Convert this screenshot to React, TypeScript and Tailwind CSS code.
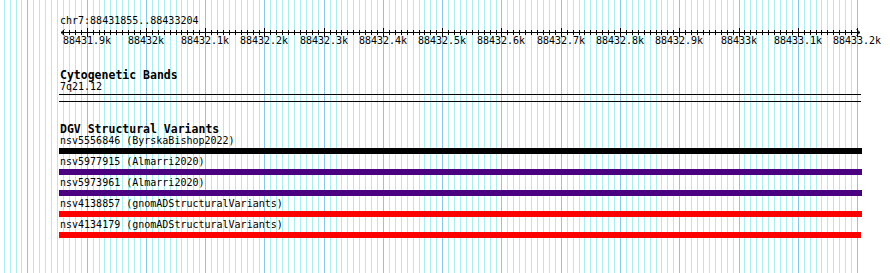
import React from "react";

const START = 88431855;
const PX = 800 / 1350;
const X0 = 60.5;
const xOf = (p: number) => Math.floor(X0 + (p - START) * PX);

const gridPs: number[] = [];
for (let p = 88431760; p <= 88433200; p += 10) gridPs.push(p);
const tickPs = gridPs.filter((p) => xOf(p) >= 62 && xOf(p) <= 858);
const majorPs = gridPs.filter((p) => p % 100 === 0 && p >= 88431900);

const features = [
  { label: "nsv5556846 (ByrskaBishop2022)", color: "bg-black", w: "w-[803px]" },
  { label: "nsv5977915 (Almarri2020)", color: "bg-[#4b0082]", w: "w-[803px]" },
  { label: "nsv5973961 (Almarri2020)", color: "bg-[#4b0082]", w: "w-[803px]" },
  { label: "nsv4138857 (gnomADStructuralVariants)", color: "bg-[#ff0000]", w: "w-[803px]" },
  { label: "nsv4134179 (gnomADStructuralVariants)", color: "bg-[#ff0000]", w: "w-[802px]" },
];

function Ruler() {
  return (
    <div className="relative h-[22px] w-[890px]">
      <svg className="absolute left-0 top-0" width={890} height={10} shapeRendering="crispEdges">
        <line x1={61} y1={5.5} x2={860} y2={5.5} stroke="#000" strokeWidth={1} />
        {tickPs.map((p) => {
          const x = xOf(p) + 0.5;
          const major = p % 100 === 0;
          return <line key={p} x1={x} x2={x} y1={major ? 1 : 3} y2={major ? 10 : 8} stroke="#000" strokeWidth={1} />;
        })}
        <polyline points="64.5,2.5 61,5.5 64.5,8.5" fill="none" stroke="#000" strokeWidth={1} shapeRendering="auto" />
        <polyline points="856.5,2.5 860,5.5 856.5,8.5" fill="none" stroke="#000" strokeWidth={1} shapeRendering="auto" />
      </svg>
      {majorPs.map((p) => (
        <div
          key={p}
          className="absolute top-[8px] -translate-x-1/2 whitespace-nowrap text-[10px] leading-[12px]"
          style={{ left: xOf(p) }}
        >
          {(p / 1000).toString() + "k"}
        </div>
      ))}
    </div>
  );
}

export default function App() {
  return (
    <div className="relative h-[273px] w-[890px] overflow-hidden bg-white text-black font-['DejaVu_Sans_Mono',monospace]">
      <div className="absolute inset-0">
        {gridPs.map((p) => (
          <div
            key={p}
            className={p % 100 === 0 ? "absolute top-0 bottom-0 w-px bg-[#88c8ea]" : "absolute top-0 bottom-0 w-px bg-[#aaeef0]"}
            style={{ left: xOf(p) }}
          />
        ))}
      </div>
      <div className="relative flex flex-col">
        <div className="h-[15px]" />
        <div className="pl-[60px] text-[10px] leading-[12px]">chr7:88431855..88433204</div>
        <Ruler />
        <div className="h-[20px]" />
        <div className="pl-[60px] text-[11.5px] font-bold leading-[12px]">Cytogenetic Bands</div>
        <div className="pl-[60px] text-[10px] leading-[12px]">7q21.12</div>
        <div className="ml-[59px] mt-px h-px w-[802px] bg-black" />
        <div className="ml-[59px] mt-[6px] h-px w-[802px] bg-black" />
        <div className="h-[21px]" />
        <div className="pl-[60px] text-[11.5px] font-bold leading-[12px]">DGV Structural Variants</div>
        {features.map((f) => (
          <div key={f.label} className="flex flex-col">
            <div className="pl-[60px] text-[10px] leading-[12px] whitespace-nowrap">{f.label}</div>
            <div className={`ml-[59px] mt-px mb-[2px] h-[6px] ${f.w} ${f.color}`} />
          </div>
        ))}
      </div>
    </div>
  );
}
